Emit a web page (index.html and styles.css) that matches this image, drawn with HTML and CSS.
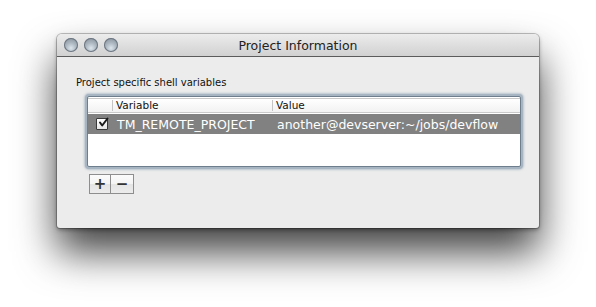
FILE: index.html
```html
<!DOCTYPE html>
<html>
<head>
<meta charset="utf-8">
<link rel="stylesheet" href="styles.css">
</head>
<body>
<div class="window">
  <div class="titlebar">
    <div class="lights">
      <span class="light"></span><span class="light"></span><span class="light"></span>
    </div>
    <div class="title">Project Information</div>
  </div>
  <div class="content">
    <div class="label">Project specific shell variables</div>
    <div class="table">
      <div class="header">
        <div class="hcell hcheck"></div>
        <div class="hcell hvar">Variable</div>
        <div class="hcell hval">Value</div>
      </div>
      <div class="row selected">
        <div class="ccheck">
          <span class="checkbox">
            <svg width="12" height="12" viewBox="0 0 12 12"><path d="M3 5.5 L5.2 8.5 L10.5 1.5" fill="none" stroke="#1a1a1a" stroke-width="2" stroke-linecap="round" stroke-linejoin="round"/></svg>
          </span>
        </div>
        <div class="cvar">TM_REMOTE_PROJECT</div>
        <div class="cval">another@devserver:~/jobs/devflow</div>
      </div>
    </div>
    <div class="buttons">
      <span class="btn">+</span><span class="btn minus">−</span>
    </div>
  </div>
</div>
</body>
</html>
```
FILE: styles.css
```css
html, body { margin: 0; padding: 0; background: #fff; }
html { height: 100%; }
body {
  min-height: 307px; box-sizing: border-box;
  padding: 34px 0 0 57px;
  font-family: "DejaVu Sans", "Liberation Sans", sans-serif;
}
.window {
  width: 482px; height: 194px; box-sizing: border-box;
  background: #ececec;
  border-radius: 5px 5px 3px 3px;
  box-shadow: 0 24px 40px rgba(0,0,0,0.75), 0 0 0 1px rgba(0,0,0,0.22), 0 2px 4px rgba(0,0,0,0.35);
  overflow: hidden;
  display: flex; flex-direction: column;
}
.titlebar {
  height: 23px; box-sizing: border-box;
  background: linear-gradient(#ececec, #d1d1d1);
  border-bottom: 1px solid #5b5b5b;
  display: flex; align-items: center; position: relative;
}
.lights { display: flex; gap: 6px; padding-left: 7px; }
.light {
  width: 14px; height: 14px; border-radius: 50%; box-sizing: border-box;
  background: radial-gradient(circle at 50% 72%, #dde5ec 0%, #aab5bf 45%, #7d8994 100%);
  box-shadow: inset 0 0 0 1px #6d7680;
}
.title {
  position: absolute; left: 0; right: 0; top: 0; bottom: 0;
  text-align: center; font-size: 12.5px; line-height: 23px; color: #222;
}
.content { padding: 19px 0 0 19px; }
.label { font-size: 10px; color: #111; line-height: 13px; }
.table {
  margin: 7px 0 0 11px;
  width: 434px; height: 71px; box-sizing: border-box;
  background: #fff;
  border: 1px solid #6f7e8c;
  box-shadow: 0 0 0 2px #a7b5c2, 0 0 2px 3px rgba(140,160,180,0.5);
  border-radius: 2px;
}
.header {
  display: flex; height: 15px; box-sizing: border-box;
  border-top: 1px solid #c9c9c9;
  border-bottom: 1px solid #c9c9c9;
  background: linear-gradient(#fff, #f2f2f2);
  font-size: 10.5px; color: #111;
  margin-top: 1px;
}
.hcell { box-sizing: border-box; padding-left: 3px; line-height: 11px; margin: 1px 0; }
.hcheck { width: 25px; border-right: 1px solid #c5c5c5; }
.hvar { width: 160px; border-right: 1px solid #c5c5c5; }
.row {
  display: flex; height: 20px; align-items: center;
  margin-top: 1px;
  color: #fff; font-size: 12.5px;
}
.selected { background: #818181; }
.ccheck { width: 25px; display: flex; justify-content: center; padding-left: 2px; box-sizing: border-box; }
.checkbox {
  width: 12px; height: 12px; box-sizing: border-box;
  background: linear-gradient(#fff, #e6e6e6);
  border: 1px solid #3a3a3a; border-radius: 1px;
  position: relative; display: block;
}
.checkbox svg { position: absolute; left: 0; top: -2px; }
.cvar { width: 160px; padding-left: 4px; box-sizing: border-box; }
.cval { padding-left: 4px; }
.buttons { display: flex; margin: 7px 0 0 13px; }
.btn {
  width: 22px; height: 20px; box-sizing: border-box;
  border: 1px solid #8e8e8e;
  background: linear-gradient(#fbfbfb 0%, #f4f4f4 50%, #e4e4e4 51%, #ececec 100%);
  font-size: 15px; font-weight: bold; color: #333;
  display: flex; align-items: center; justify-content: center; line-height: 1;
}
.minus { border-left: none; width: 23px; }
```
